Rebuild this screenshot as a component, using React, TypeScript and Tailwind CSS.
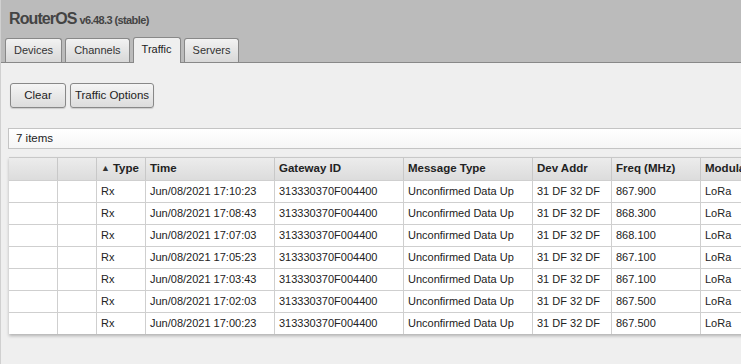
import React from "react";

const TABS = ["Devices", "Channels", "Traffic", "Servers"];

const COLUMNS = [
  { label: "", width: "w-[49px]" },
  { label: "", width: "w-[39px]" },
  { label: "Type", width: "w-[49px]", sorted: true },
  { label: "Time", width: "w-[129px]" },
  { label: "Gateway ID", width: "w-[129px]" },
  { label: "Message Type", width: "w-[129px]" },
  { label: "Dev Addr", width: "w-[79px]" },
  { label: "Freq (MHz)", width: "w-[89px]" },
  { label: "Modulation", width: "w-[80px]" },
];

const ROWS = [
  ["17:10:23", "867.900"],
  ["17:08:43", "868.300"],
  ["17:07:03", "868.100"],
  ["17:05:23", "867.100"],
  ["17:03:43", "867.100"],
  ["17:02:03", "867.500"],
  ["17:00:23", "867.500"],
];

export default function App() {
  return (
    <div className="w-[741px] h-[364px] overflow-hidden bg-[#efefef] text-[11px] text-[#222] font-['Liberation_Sans',Arial,sans-serif] border-l border-[#d0d0d0]">
      {/* header + tabs */}
      <div className="h-[63px] bg-[#bbbbbb] border-b border-[#888] flex flex-col">
        <div className="h-[38px] pl-[8px] pt-[7px] flex items-baseline gap-[3px] text-[#444]">
          <span className="text-[16px] font-bold tracking-[-0.9px]">RouterOS</span>
          <span className="text-[11px] font-bold tracking-[-0.6px]">v6.48.3 (stable)</span>
        </div>
        <div className="flex items-end gap-[3px] pl-[4px] h-[25px]">
          {TABS.map((t) => {
            const active = t === "Traffic";
            return (
              <div
                key={t}
                className={`px-[8px] rounded-t-[3px] border border-b-0 border-[#888] flex items-center text-[11px] ${
                  active
                    ? "h-[26px] bg-[#efefef] -mb-px pb-[2px]"
                    : "h-[24px] bg-gradient-to-b from-[#f2f2f2] to-[#d8d8d8] text-[#333]"
                }`}
              >
                {t}
              </div>
            );
          })}
        </div>
      </div>

      {/* toolbar */}
      <div className="flex gap-[4px] pl-[9px] pt-[20px]">
        <button className="h-[25px] w-[56px] rounded-[3px] border border-[#888] bg-gradient-to-b from-[#f5f5f5] to-[#dcdcdc] shadow-[0_1px_1px_rgba(0,0,0,0.15)] text-[11.5px]">
          Clear
        </button>
        <button className="h-[25px] w-[84px] rounded-[3px] border border-[#888] bg-gradient-to-b from-[#f5f5f5] to-[#dcdcdc] shadow-[0_1px_1px_rgba(0,0,0,0.15)] text-[11.5px] whitespace-nowrap">
          Traffic Options
        </button>
      </div>

      {/* item count */}
      <div className="mt-[20px] ml-[7px] h-[21px] border border-r-0 border-[#c4c4c4] bg-gradient-to-b from-white to-[#f6f6f6] flex items-center pl-[7px] text-[11.5px]">
        7 items
      </div>

      {/* table */}
      <div className="mt-[8px] ml-[8px] w-max shadow-[0_2px_3px_rgba(0,0,0,0.25)]">
        <div className="flex h-[23px] bg-gradient-to-b from-[#ececec] to-[#dcdcdc] border-t border-[#c8c8c8]">
          {COLUMNS.map((c, i) => (
            <div
              key={i}
              className={`${c.width} shrink-0 border-r border-[#c8c8c8] flex items-center pl-[4px] font-bold whitespace-nowrap overflow-hidden text-[11.5px]`}
            >
              {c.sorted && <span className="text-[9px] mr-[3px] text-[#333]">▲</span>}
              {c.label}
            </div>
          ))}
        </div>
        {ROWS.map(([time, freq], r) => (
          <div key={r} className="flex h-[22px] bg-white border-t border-[#cfcfcf]">
            {[
              "",
              "",
              "Rx",
              `Jun/08/2021 ${time}`,
              "313330370F004400",
              "Unconfirmed Data Up",
              "31 DF 32 DF",
              freq,
              "LoRa",
            ].map((v, i) => (
              <div
                key={i}
                className={`${COLUMNS[i].width} shrink-0 border-r border-[#cfcfcf] flex items-center pl-[4px] whitespace-nowrap overflow-hidden`}
              >
                {v}
              </div>
            ))}
          </div>
        ))}
      </div>
    </div>
  );
}
